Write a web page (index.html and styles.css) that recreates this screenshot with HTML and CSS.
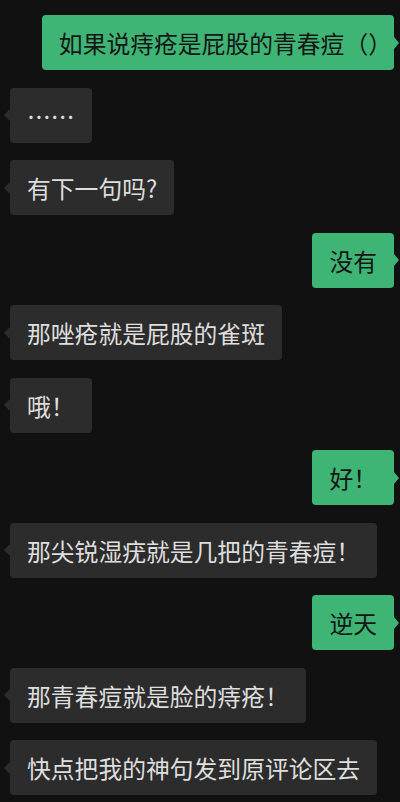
FILE: index.html
```html
<!DOCTYPE html>
<html lang="zh-CN">
<head>
    <meta charset="UTF-8">
    <meta name="viewport" content="width=device-width, initial-scale=1.0">
    <title>聊天记录</title>
    <link rel="stylesheet" href="styles.css">
</head>
<body>

<section class="chat">
    <div class="msg me">如果说痔疮是屁股的青春痘（<span class="paren-close">）</span></div>
    <div class="msg other">……</div>
    <div class="msg other">有下一句吗?</div>
    <div class="msg me">没有</div>
    <div class="msg other">那唑疮就是屁股的雀斑</div>
    <div class="msg other">哦！</div>
    <div class="msg me">好！</div>
    <div class="msg other">那尖锐湿疣就是几把的青春痘！</div>
    <div class="msg me">逆天</div>
    <div class="msg other">那青春痘就是脸的痔疮！</div>
    <div class="msg other">快点把我的神句发到原评论区去</div>
</section>

</body>
</html>
```

FILE: styles.css
```css
body {
    margin: 0;
    padding: 0;
    background-color: #111111;
    font-family: "Noto Sans CJK SC", "Noto Sans", sans-serif;
}
.chat {
    display: flex;
    flex-direction: column;
    gap: 17.5px;
    padding: 15px 6px 0 10px;
    height: 802px;
    box-sizing: border-box;
    overflow: hidden;
}
.msg {
    position: relative;
    padding: 12px 17px;
    font-size: 23.8px;
    line-height: 31px;
    border-radius: 4px;
    white-space: nowrap;
}
.msg::after {
    content: "";
    position: absolute;
    top: 50%;
    margin-top: -6px;
    border-top: 6px solid transparent;
    border-bottom: 6px solid transparent;
}
.other {
    align-self: flex-start;
    background-color: #2c2c2c;
    color: #dedede;
}
.other::after {
    left: -6px;
    border-right: 6px solid #2c2c2c;
}
.me {
    align-self: flex-end;
    background-color: #3eb575;
    color: #151515;
}
.me::after {
    right: -5px;
    border-left: 5px solid #3eb575;
}
.paren-close {
    letter-spacing: -15px;
}
```
